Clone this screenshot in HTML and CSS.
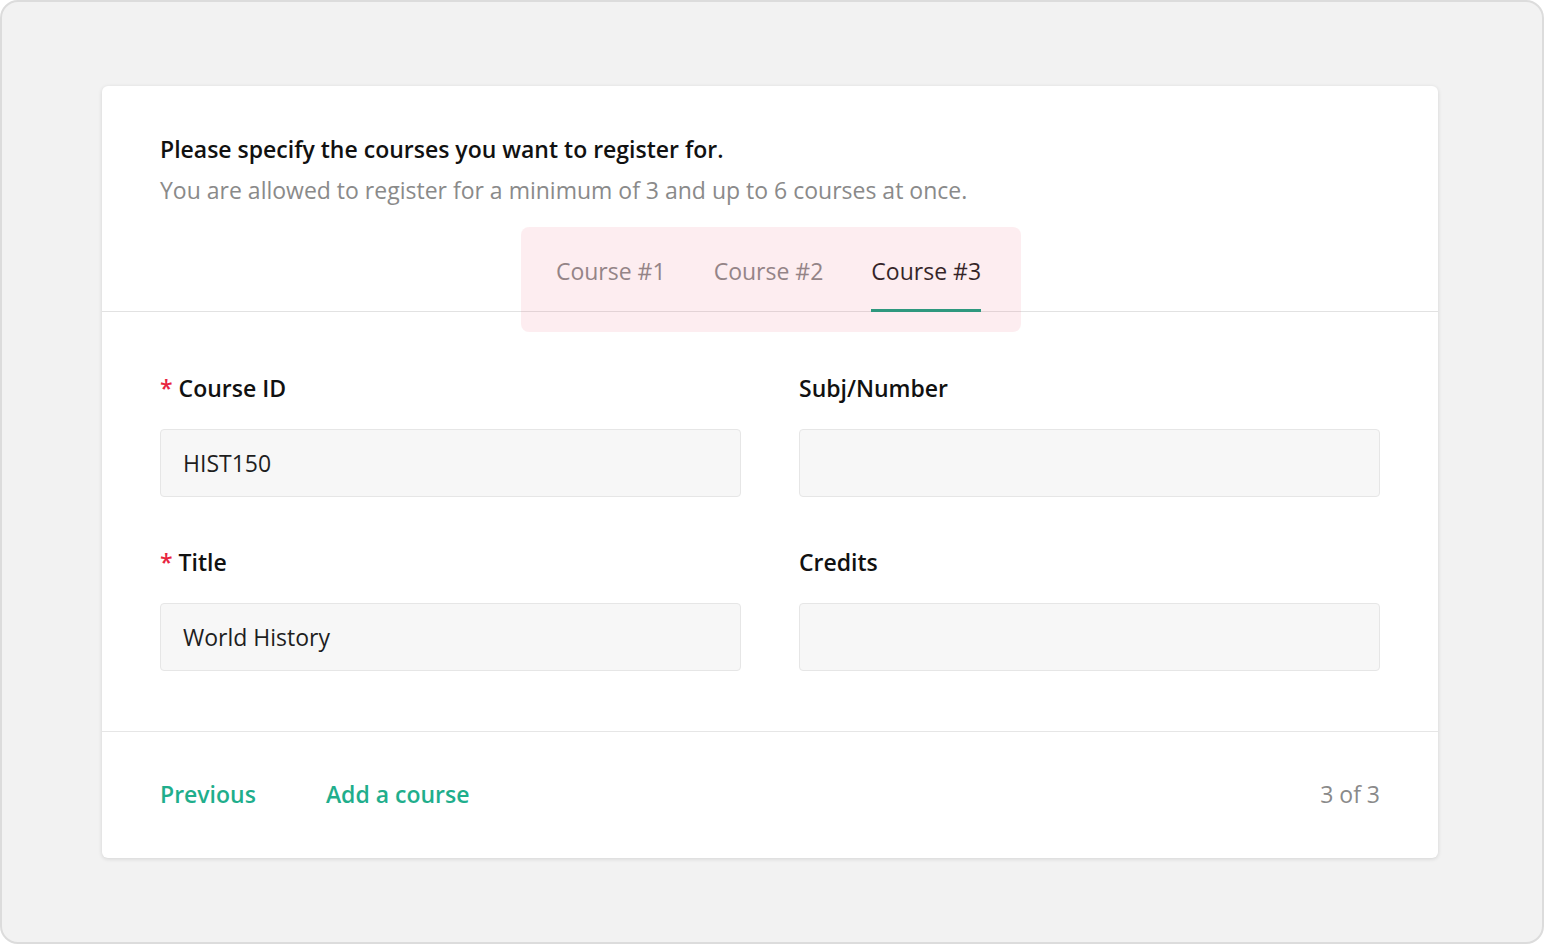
FILE: index.html
```html
<!DOCTYPE html>
<html lang="en">
<head>
    <meta charset="UTF-8">
    <meta name="viewport" content="width=device-width, initial-scale=1.0">
    <title>Course Registration</title>
    <link rel="stylesheet" href="styles.css">
</head>
<body>
    <div class="frame">
        <div class="card">
            <div class="card-head">
                <h2>Please specify the courses you want to register for.</h2>
                <p class="hint">You are allowed to register for a minimum of 3 and up to 6 courses at once.</p>
            </div>

            <div class="tabs">
                <div class="tab-list">
                    <span class="tab-highlight"></span>
                    <div class="tab">Course #1</div>
                    <div class="tab">Course #2</div>
                    <div class="tab active">Course #3</div>
                </div>
            </div>

            <form class="course-form" action="#" method="post">
                <div class="field">
                    <label for="course-id"><span class="req">*</span> Course ID</label>
                    <input type="text" id="course-id" name="course-id" value="HIST150">
                </div>
                <div class="field">
                    <label for="subj">Subj/Number</label>
                    <input type="text" id="subj" name="subj">
                </div>
                <div class="field">
                    <label for="title"><span class="req">*</span> Title</label>
                    <input type="text" id="title" name="title" value="World History">
                </div>
                <div class="field">
                    <label for="credits">Credits</label>
                    <input type="text" id="credits" name="credits">
                </div>
            </form>

            <div class="card-foot">
                <a href="#" class="link">Previous</a>
                <a href="#" class="link">Add a course</a>
                <span class="count">3 of 3</span>
            </div>
        </div>
    </div>
</body>
</html>
```

FILE: styles.css
```css
html, body {
    margin: 0;
    height: 100%;
}

body {
    font-family: 'Open Sans', 'Noto Sans', sans-serif;
    background-color: #fff;
}

.frame {
    box-sizing: border-box;
    width: 1544px;
    height: 944px;
    border: 2px solid #dcdcdc;
    border-radius: 18px;
    background-color: #f2f2f2;
    padding: 84px 0 0 100px;
}

.card {
    width: 1336px;
    background-color: #fff;
    border-radius: 6px;
    box-shadow: 0 1px 4px rgba(0, 0, 0, 0.13);
}

.card-head {
    padding: 48px 58px 0;
}

.card-head h2 {
    margin: 0;
    font-size: 23px;
    line-height: 30px;
    font-weight: 600;
    color: #111;
}

.hint {
    margin: 11px 0 0;
    font-size: 23px;
    line-height: 30px;
    color: #8a8a8a;
}

.tabs {
    margin-top: 51px;
    display: flex;
    justify-content: center;
    border-bottom: 1px solid #e2e2e2;
}

.tab-list {
    position: relative;
    display: flex;
    gap: 48px;
    margin-left: -3px;
}

.tab-highlight {
    position: absolute;
    top: -29px;
    bottom: -21px;
    left: -35px;
    right: -40px;
    border-radius: 8px;
    background-color: rgba(240, 90, 120, 0.11);
}

.tab {
    font-size: 23px;
    line-height: 30px;
    color: #8a8a8a;
    padding-bottom: 23px;
    border-bottom: 3px solid transparent;
    margin-bottom: -1px;
}

.tab.active {
    color: #1e1e1e;
    border-bottom-color: #17a07f;
}

.course-form {
    display: grid;
    grid-template-columns: 1fr 1fr;
    column-gap: 58px;
    row-gap: 50px;
    padding: 61px 58px 60px;
    border-bottom: 1px solid #e6e6e6;
}

.field label {
    display: block;
    font-size: 23px;
    line-height: 30px;
    font-weight: 600;
    color: #111;
    margin-bottom: 26px;
}

.req {
    color: #e8253f;
}

.field input {
    box-sizing: border-box;
    width: 100%;
    height: 68px;
    padding: 0 22px;
    border: 1px solid #e6e6e6;
    border-radius: 4px;
    background-color: #f7f7f7;
    font-family: inherit;
    font-size: 23px;
    color: #1e1e1e;
}

.card-foot {
    display: flex;
    align-items: center;
    gap: 70px;
    padding: 47px 58px 49px;
}

.link {
    font-size: 23px;
    line-height: 30px;
    font-weight: 600;
    color: #1fae8c;
    text-decoration: none;
}

.count {
    margin-left: auto;
    font-size: 23px;
    line-height: 30px;
    color: #8a8a8a;
}
```
